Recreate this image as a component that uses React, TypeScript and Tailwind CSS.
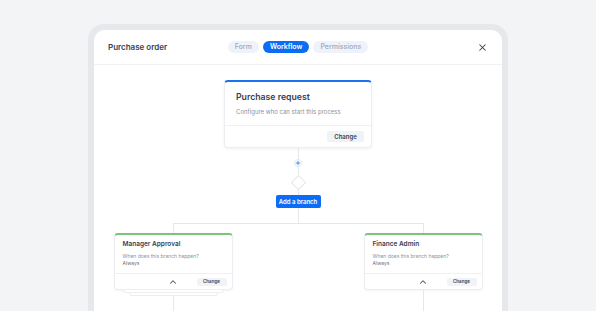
import { ChevronUp, X, Plus } from "lucide-react";

type Branch = {
  title: string;
  stacked?: boolean;
};

const branches: Branch[] = [
  { title: "Manager Approval", stacked: true },
  { title: "Finance Admin" },
];

const tabs = ["Form", "Workflow", "Permissions"];

function VLine({ h }: { h: string }) {
  return <div className={`w-px shrink-0 bg-[#e5e7eb] ${h}`} />;
}

function BranchCard({ branch }: { branch: Branch }) {
  return (
    <div className="flex w-[119px] flex-col items-center">
      <div className="w-full rounded-[4px] border border-[#eceef1] border-t-2 border-t-[#7cc47c] bg-white shadow-[0_1px_2px_rgba(16,24,40,0.05)]">
        <div className="px-[8px] pt-[5px] pb-[6px]">
          <div className="text-[6.5px] leading-[8px] font-semibold text-[#374151]">
            {branch.title}
          </div>
          <div className="mt-[5px] text-[5px] leading-[7px] text-[#8a93a3]">
            When does this branch happen?
          </div>
          <div className="text-[5px] leading-[7px] text-[#6b7280]">Always</div>
        </div>
        <div className="grid h-[16px] grid-cols-3 items-center border-t border-[#eef0f3]">
          <div />
          <div className="flex justify-center">
            <ChevronUp size={10} strokeWidth={2.5} className="text-[#4b5563]" />
          </div>
          <div className="flex justify-end pr-[5px]">
            <button className="h-[8px] w-[30px] rounded-[2px] bg-[#f1f3f6] text-[4.5px] leading-[8px] font-semibold text-[#374151]">
              Change
            </button>
          </div>
        </div>
      </div>
      {branch.stacked && (
        <>
          <div className="h-[3px] w-[101px] rounded-b-[3px] border-x border-b border-[#eceef1] bg-white" />
          <div className="h-[3px] w-[89px] rounded-b-[3px] border-x border-b border-[#eceef1] bg-white" />
        </>
      )}
      <VLine h="h-[40px]" />
    </div>
  );
}

export default function App() {
  return (
    <div
      className="flex h-[311px] w-[596px] justify-center overflow-hidden bg-[#f3f4f6] pt-[24px]"
      style={{ fontFamily: "Inter, 'Noto Sans', sans-serif" }}
    >
      <div className="h-[300px] w-[420px] shrink-0 rounded-t-[16px] bg-[#e6e8eb] px-[6px] pt-[6px]">
        <div className="flex h-full flex-col rounded-t-[11px] bg-white">
          {/* header */}
          <div className="grid h-[35px] shrink-0 grid-cols-[1fr_auto_1fr] items-center border-b border-[#f1f2f4] px-[14px]">
            <div className="text-[8px] font-semibold text-[#374151]">Purchase order</div>
            <div className="flex gap-[4px]">
              {tabs.map((t) => (
                <div
                  key={t}
                  className={
                    t === "Workflow"
                      ? "flex h-[12px] items-center rounded-full bg-[#0b6cf5] px-[7px] text-[7px] font-semibold text-white"
                      : "flex h-[12px] items-center rounded-full bg-[#eef3fb] px-[7px] text-[7px] font-medium text-[#9ea8b8]"
                  }
                >
                  {t}
                </div>
              ))}
            </div>
            <div className="flex justify-end">
              <X size={11} strokeWidth={2.2} className="text-[#374151]" />
            </div>
          </div>

          {/* workflow canvas */}
          <div className="flex flex-col items-center pt-[15px]">
            <div className="w-[148px] shrink-0 rounded-[4px] border border-[#eceef1] border-t-2 border-t-[#1a72f0] bg-white shadow-[0_1px_3px_rgba(16,24,40,0.06)]">
              <div className="px-[11px] pt-[10px] pb-[9px]">
                <div className="text-[8.7px] leading-[11px] font-semibold text-[#374151]">
                  Purchase request
                </div>
                <div className="mt-[5px] text-[6px] leading-[8px] text-[#8a93a3]">
                  Configure who can start this process
                </div>
              </div>
              <div className="flex h-[22px] items-center justify-end border-t border-[#eef0f3] pr-[7px]">
                <button className="h-[11px] w-[37px] rounded-[2px] bg-[#eff2f6] text-[6px] font-semibold text-[#374151]">
                  Change
                </button>
              </div>
            </div>

            <VLine h="h-[11px]" />
            <div className="flex h-[8px] w-[8px] shrink-0 items-center justify-center rounded-full border border-[#e5e7eb] bg-white">
              <Plus size={6} strokeWidth={3} className="text-[#1a72f0]" />
            </div>
            <VLine h="h-[7px]" />
            <div className="flex h-[16px] w-[16px] shrink-0 items-center justify-center">
              <div className="h-[11px] w-[11px] rotate-45 border border-[#e5e7eb] bg-white" />
            </div>
            <VLine h="h-[5px]" />
            <button className="h-[13px] w-[45px] shrink-0 rounded-[2px] bg-[#0b6cf5] text-[6px] font-semibold text-white">
              Add a branch
            </button>
            <VLine h="h-[15px]" />
            <div className="h-[10px] w-[251px] shrink-0 border-x border-t border-[#e5e7eb]" />

            <div className="flex w-[369px] shrink-0 justify-between">
              {branches.map((b) => (
                <BranchCard key={b.title} branch={b} />
              ))}
            </div>
          </div>
        </div>
      </div>
    </div>
  );
}
